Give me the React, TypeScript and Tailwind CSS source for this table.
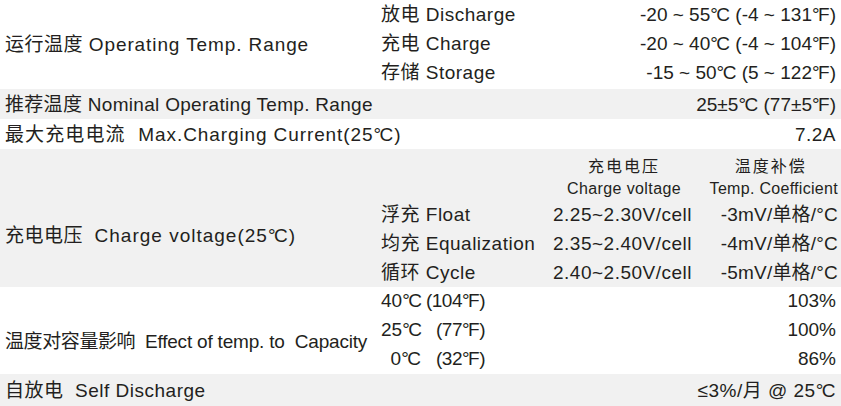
import React from "react";

const Deg = ({ u = "C" }: { u?: string }) => (
  <>
    <span className="tracking-[-1.5px]">°</span>
    {u}
  </>
);

const Line = ({ children, className = "" }: { children: React.ReactNode; className?: string }) => (
  <div className={`h-[29px] flex items-center whitespace-pre ${className}`}>{children}</div>
);

export default function App() {
  return (
    <div className="w-[841px] h-[406px] bg-white text-[#231f20] text-[19px] leading-none tracking-[0.5px] font-['Liberation_Sans','Noto_Sans_CJK_SC',sans-serif] overflow-hidden">
      {/* Operating temp */}
      <div className="h-[89px] flex">
        <div className="w-[381px] pl-[5px] flex items-center whitespace-pre">
          <span>运行温度 </span>
          <span className="tracking-[0.9px]">Operating Temp. Range</span>
        </div>
        <div className="flex-1 pr-[5px] flex flex-col">
          <Line className="justify-between"><span>放电 Discharge</span><span className="tracking-normal">-20 ~ 55<Deg /> (-4 ~ 131<Deg u="F" />)</span></Line>
          <Line className="justify-between"><span>充电 Charge</span><span className="tracking-normal">-20 ~ 40<Deg /> (-4 ~ 104<Deg u="F" />)</span></Line>
          <Line className="justify-between"><span>存储 Storage</span><span className="tracking-normal">-15 ~ 50<Deg /> (5 ~ 122<Deg u="F" />)</span></Line>
        </div>
      </div>
      {/* Nominal */}
      <div className="h-[30px] bg-[#f1f1f1] flex items-center justify-between pl-[5px] pr-[5px] whitespace-pre">
        <span className="tracking-[0.3px]">推荐温度 Nominal Operating Temp. Range</span>
        <span className="tracking-normal">25±5<Deg /> (77±5<Deg u="F" />)</span>
      </div>
      {/* Max charging */}
      <div className="h-[30px] flex items-center justify-between pl-[5px] pr-[5px] whitespace-pre">
        <span>
          <span className="tracking-[1.1px]">最大充电电流  </span>
          <span className="tracking-[0.9px]">Max.Charging Current(25<Deg />)</span>
        </span>
        <span>7.2A</span>
      </div>
      {/* Charge voltage */}
      <div className="h-[138px] bg-[#f1f1f1] flex">
        <div className="w-[381px] pl-[5px] pt-[72px] whitespace-pre">
          <Line>
            <span>充电电压  </span>
            <span className="tracking-[1px]">Charge voltage(25<Deg />)</span>
          </Line>
        </div>
        <div className="flex-1 pr-[3px] pt-[7px] flex flex-col">
          <div className="h-[44px] flex text-[16px] tracking-[0.2px]">
            <div className="w-[172px]" />
            <div className="w-[138px] flex flex-col items-center pl-[4px]">
              <div className="h-[22px] flex items-center tracking-[2px]">充电电压</div>
              <div className="h-[22px] flex items-center tracking-[0.4px]">Charge voltage</div>
            </div>
            <div className="flex-1 flex justify-end">
              <div className="flex flex-col items-center">
                <div className="h-[22px] flex items-center tracking-[2px] pr-[6px]">温度补偿</div>
                <div className="h-[22px] flex items-center tracking-[0.3px]">Temp. Coefficient</div>
              </div>
            </div>
          </div>
          {[
            ["浮充 Float", "2.25~2.30V/cell", "-3mV/单格/"],
            ["均充 Equalization", "2.35~2.40V/cell", "-4mV/单格/"],
            ["循环 Cycle", "2.40~2.50V/cell", "-5mV/单格/"],
          ].map(([a, b, c]) => (
            <Line key={a}>
              <div className="w-[172px]">{a}</div>
              <div className="w-[134px] text-center">{b}</div>
              <div className="flex-1 text-right tracking-[0.2px]">{c}°C</div>
            </Line>
          ))}
        </div>
      </div>
      {/* Effect of temp */}
      <div className="h-[87px] flex">
        <div className="w-[381px] pl-[5px] pt-[40px] whitespace-pre">
          <Line>
            <span className="tracking-[-0.4px]">温度对容量影响  </span>
            <span className="tracking-[-0.2px]">Effect of temp. to  Capacity</span>
          </Line>
        </div>
        <div className="flex-1 pr-[5px] flex flex-col -mt-[1px]">
          {[
            ["40", "104", "103%"],
            ["25", "77", "100%"],
            ["0", "32", "86%"],
          ].map(([a, b, c]) => (
            <Line key={a} className="tracking-normal">
              <div className="w-[40px] text-right">{a}<Deg /></div>
              <div className="w-[64px] text-right tracking-[-0.5px]">({b}<Deg u="F" />)</div>
              <div className="flex-1 text-right">{c}</div>
            </Line>
          ))}
        </div>
      </div>
      {/* Self discharge */}
      <div className="h-[32px] bg-[#f1f1f1] flex items-center justify-between pl-[5px] pr-[5px] whitespace-pre">
        <span>自放电  Self Discharge</span>
        <span>≤3%/月 @ 25<Deg /></span>
      </div>
    </div>
  );
}
